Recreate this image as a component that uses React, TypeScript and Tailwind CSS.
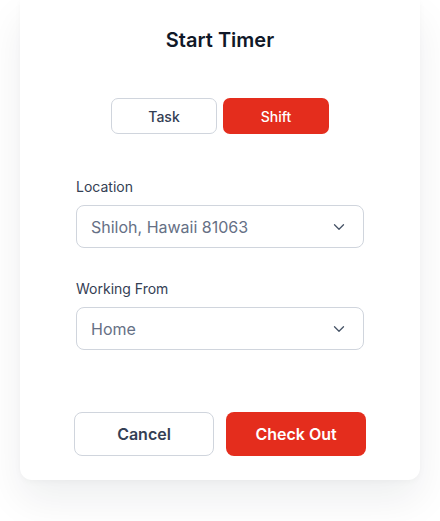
import { ChevronDown } from "lucide-react"

function Select({ label, value }: { label: string; value: string }) {
  return (
    <div>
      <p className="text-[14px] leading-5 text-[#344054] mb-[8px]">{label}</p>
      <div className="h-[43px] w-full rounded-[8px] border border-[#d0d5dd] bg-white flex items-center justify-between pl-[14px] pr-[15px]">
        <span className="text-[16px] text-[#667085]">{value}</span>
        <ChevronDown className="w-[18px] h-[18px] text-[#475467]" strokeWidth={1.75} />
      </div>
    </div>
  )
}

export default function App() {
  return (
    <div className="w-[440px] h-[521px] bg-white px-5" style={{ fontFamily: "Inter, 'Noto Sans', sans-serif" }}>
      <div className="h-[480px] rounded-b-[12px] bg-white shadow-[0_20px_40px_rgba(16,24,40,0.07),0_2px_6px_rgba(16,24,40,0.03)] flex flex-col items-center">
        <h1 className="mt-[28px] text-[20px] leading-6 font-semibold text-[#101828]">Start Timer</h1>

        <div className="mt-[46px] flex gap-[6px]">
          <button className="w-[106px] h-[36px] rounded-[7px] border border-[#d0d5dd] bg-white text-[14px] font-medium text-[#344054]">
            Task
          </button>
          <button className="w-[106px] h-[36px] rounded-[7px] bg-[#e42d1d] text-[14px] font-medium text-white">
            Shift
          </button>
        </div>

        <div className="mt-[43px] w-[288px] flex flex-col gap-[31px]">
          <Select label="Location" value="Shiloh, Hawaii 81063" />
          <Select label="Working From" value="Home" />
        </div>

        <div className="mt-[62px] flex gap-[12px]">
          <button className="w-[140px] h-[44px] rounded-[8px] border border-[#d0d5dd] bg-white text-[16px] font-semibold text-[#344054]">
            Cancel
          </button>
          <button className="w-[140px] h-[44px] rounded-[8px] bg-[#e42d1d] text-[16px] font-semibold text-white">
            Check Out
          </button>
        </div>
      </div>
    </div>
  )
}
